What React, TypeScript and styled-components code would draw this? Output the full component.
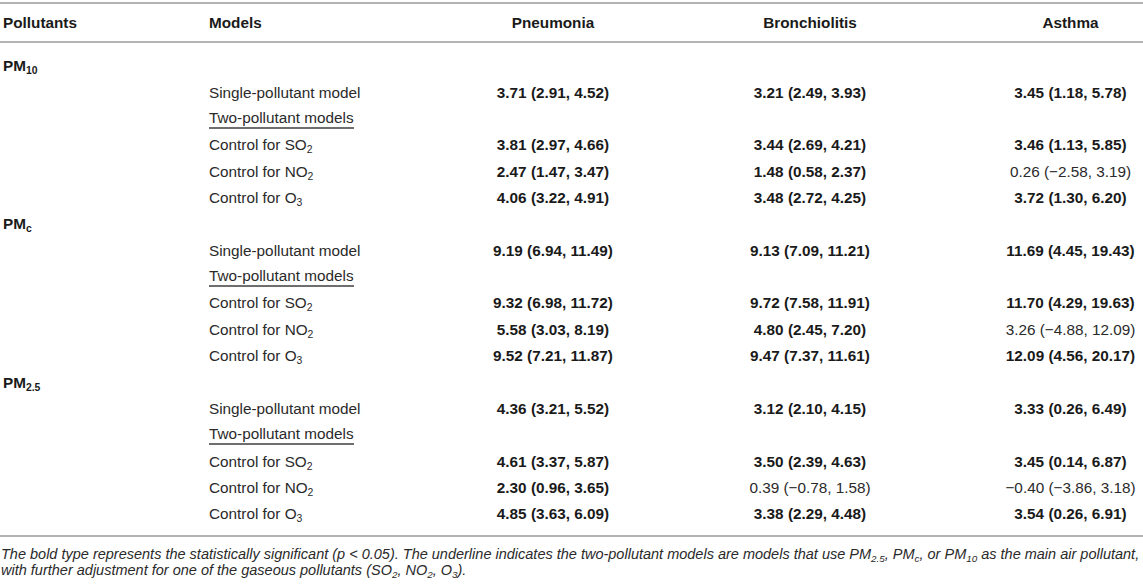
import React from "react";
import styled, { createGlobalStyle } from "styled-components";

const Global = createGlobalStyle`
  html, body { margin: 0; padding: 0; background: #ffffff; }
  body { font-family: "Liberation Sans", Arial, Helvetica, sans-serif; color: #222222; }
`;

const Page = styled.div`
  width: 1143px;
  padding-top: 2px;
`;

const Grid = styled.div`
  display: grid;
  grid-template-columns: 209px 254px 180px 334px 166px;
`;

const HeadRow = styled(Grid)`
  height: 37px;
  border-top: 2px solid #b3b3b3;
  border-bottom: 2px solid #b3b3b3;
  align-items: center;
`;

const Body = styled.div`
  padding: 10px 0 8px;
  border-bottom: 2px solid #b3b3b3;
`;

const Row = styled(Grid)`
  height: 26.35px;
  align-items: center;
`;

const Cell = styled.div<{ $align?: "left" | "center"; $bold?: boolean; $pl?: number }>`
  font-size: 15.3px;
  line-height: 17.6px;
  white-space: nowrap;
  text-align: ${(p) => p.$align ?? "center"};
  font-weight: ${(p) => (p.$bold ? 700 : 400)};
  padding-left: ${(p) => p.$pl ?? 0}px;
  color: ${(p) => (p.$bold ? "#1a1a1a" : "#2a2a2a")};
`;

const Sub = styled.sub`
  font-size: 0.68em;
  vertical-align: -0.3em;
  line-height: 0;
`;

const Under = styled.span`
  display: inline-block;
  border-bottom: 2px solid #6e6e6e;
`;

const Foot = styled.p`
  margin: 0;
  padding: 9px 0 0 1px;
  font-size: 14.5px;
  line-height: 16px;
  font-style: italic;
  color: #2a2a2a;
  white-space: nowrap;
`;

type V = { t: string; b: boolean } | null;
type R = { label: React.ReactNode; vals: [V, V, V] };

const B = (t: string): V => ({ t, b: true });
const N = (t: string): V => ({ t, b: false });

const two: R = { label: <Under>Two-pollutant models</Under>, vals: [null, null, null] };
const so2 = <>Control for SO<Sub>2</Sub></>;
const no2 = <>Control for NO<Sub>2</Sub></>;
const o3 = <>Control for O<Sub>3</Sub></>;

const groups: { name: React.ReactNode; rows: R[] }[] = [
  {
    name: <>PM<Sub>10</Sub></>,
    rows: [
      { label: "Single-pollutant model", vals: [B("3.71 (2.91, 4.52)"), B("3.21 (2.49, 3.93)"), B("3.45 (1.18, 5.78)")] },
      two,
      { label: so2, vals: [B("3.81 (2.97, 4.66)"), B("3.44 (2.69, 4.21)"), B("3.46 (1.13, 5.85)")] },
      { label: no2, vals: [B("2.47 (1.47, 3.47)"), B("1.48 (0.58, 2.37)"), N("0.26 (\u22122.58, 3.19)")] },
      { label: o3, vals: [B("4.06 (3.22, 4.91)"), B("3.48 (2.72, 4.25)"), B("3.72 (1.30, 6.20)")] },
    ],
  },
  {
    name: <>PM<Sub>c</Sub></>,
    rows: [
      { label: "Single-pollutant model", vals: [B("9.19 (6.94, 11.49)"), B("9.13 (7.09, 11.21)"), B("11.69 (4.45, 19.43)")] },
      two,
      { label: so2, vals: [B("9.32 (6.98, 11.72)"), B("9.72 (7.58, 11.91)"), B("11.70 (4.29, 19.63)")] },
      { label: no2, vals: [B("5.58 (3.03, 8.19)"), B("4.80 (2.45, 7.20)"), N("3.26 (\u22124.88, 12.09)")] },
      { label: o3, vals: [B("9.52 (7.21, 11.87)"), B("9.47 (7.37, 11.61)"), B("12.09 (4.56, 20.17)")] },
    ],
  },
  {
    name: <>PM<Sub>2.5</Sub></>,
    rows: [
      { label: "Single-pollutant model", vals: [B("4.36 (3.21, 5.52)"), B("3.12 (2.10, 4.15)"), B("3.33 (0.26, 6.49)")] },
      two,
      { label: so2, vals: [B("4.61 (3.37, 5.87)"), B("3.50 (2.39, 4.63)"), B("3.45 (0.14, 6.87)")] },
      { label: no2, vals: [B("2.30 (0.96, 3.65)"), N("0.39 (\u22120.78, 1.58)"), N("\u22120.40 (\u22123.86, 3.18)")] },
      { label: o3, vals: [B("4.85 (3.63, 6.09)"), B("3.38 (2.29, 4.48)"), B("3.54 (0.26, 6.91)")] },
    ],
  },
];

const lastPl = 21;

export default function App() {
  return (
    <Page>
      <Global />
      <HeadRow>
        <Cell $align="left" $bold $pl={3}>Pollutants</Cell>
        <Cell $align="left" $bold>Models</Cell>
        <Cell $bold>Pneumonia</Cell>
        <Cell $bold>Bronchiolitis</Cell>
        <Cell $bold $pl={lastPl}>Asthma</Cell>
      </HeadRow>
      <Body>
        {groups.map((g, gi) => (
          <React.Fragment key={gi}>
            <Row>
              <Cell $align="left" $bold $pl={3}>{g.name}</Cell>
            </Row>
            {g.rows.map((r, ri) => (
              <Row key={ri}>
                <Cell />
                <Cell $align="left">{r.label}</Cell>
                {r.vals.map((v, vi) => (
                  <Cell key={vi} $bold={v?.b} $pl={vi === 2 ? lastPl : 0}>
                    {v?.t ?? ""}
                  </Cell>
                ))}
              </Row>
            ))}
          </React.Fragment>
        ))}
      </Body>
      <Foot>
        The bold type represents the statistically significant (p &lt; 0.05). The underline indicates the two-pollutant models are models that use PM<Sub>2.5</Sub>, PM<Sub>c</Sub>, or PM<Sub>10</Sub> as the main air pollutant,
        <br />
        with further adjustment for one of the gaseous pollutants (SO<Sub>2</Sub>, NO<Sub>2</Sub>, O<Sub>3</Sub>).
      </Foot>
    </Page>
  );
}
